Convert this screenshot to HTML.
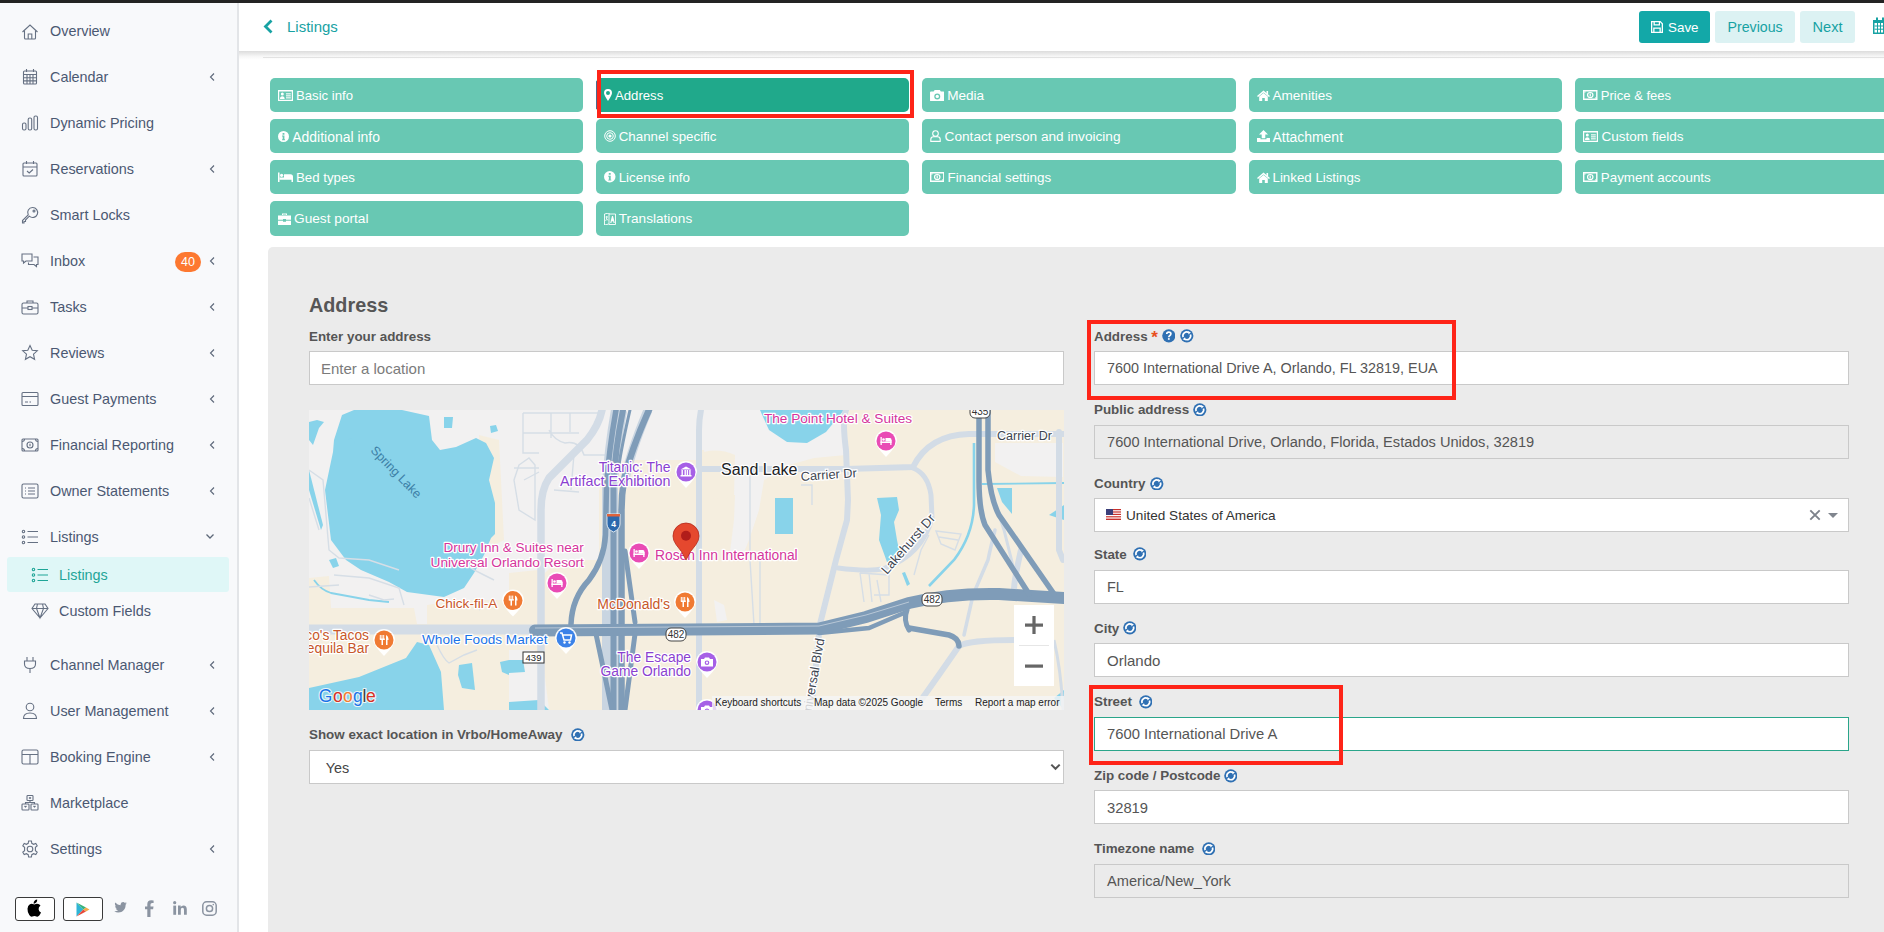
<!DOCTYPE html>
<html><head><meta charset="utf-8">
<style>
*{box-sizing:border-box;margin:0;padding:0}
html,body{width:1884px;height:932px;overflow:hidden;background:#fff;font-family:"Liberation Sans",sans-serif}
.abs{position:absolute}
#topbar{position:absolute;left:0;top:0;width:1884px;height:3px;background:#232323}
#side{position:absolute;left:0;top:3px;width:237px;height:929px;background:#f8f9fb}
#sideb{position:absolute;left:237px;top:3px;width:2px;height:929px;background:#e3e5e8}
.nav{position:absolute;left:0;width:237px;height:30px;color:#4b5872;font-size:14.4px}
.nav .t{position:absolute;left:50px;top:8px;white-space:nowrap}
.nav svg.i{position:absolute;left:20px;top:5.5px;width:20px;height:20px;fill:none;stroke:#667183;stroke-width:1.1}
.nav .ch{position:absolute;left:208px;top:11px;width:8px;height:10px}
#header{position:absolute;left:239px;top:3px;width:1645px;height:48px;background:#fff}
#hshadow{position:absolute;left:239px;top:51px;width:1645px;height:9px;background:linear-gradient(#dcdcdc,#f6f6f6 60%,#fff)}
.tab{position:absolute;height:34px;background:#68c8b3;border-radius:5px;color:#fff;font-size:13.5px;white-space:nowrap}
.tab .tt{position:absolute;left:26px;top:10px}
.tab svg{position:absolute;fill:#fff}
.tab.active{background:#20a98b}
.red{position:absolute;border:4px solid #fe2418}
#panel{position:absolute;left:268px;top:247px;width:1640px;height:700px;background:#ebebeb;border-radius:5px}
.lbl{position:absolute;font-weight:bold;font-size:13.4px;color:#555;white-space:nowrap}
.inp{position:absolute;height:34px;background:#fff;border:1px solid #c9c9c9;font-size:14.4px;color:#555;white-space:nowrap}
.inp .v{position:absolute;left:12px;top:8px}
.inp.dis{background:#ebebeb}
.rfa{position:absolute;width:13.6px;height:13.6px}
.badge{position:absolute;left:175px;top:7px;width:26px;height:20px;border-radius:10px;background:#fd7830;color:#fff;font-size:12.5px;text-align:center;line-height:20px}
.nav .chd{position:absolute;left:205px;top:11px;width:10px;height:8px}
#subact{position:absolute;left:7px;top:557px;width:222px;height:35px;background:#dff7f7;border-radius:3px}
.nav.sub .t{left:59px}
.nav.sub svg.i{left:30px}
.nav.act{color:#1fa597}
.nav.act svg.i{stroke:#1fa597}
</style></head><body>
<div id="topbar"></div>
<div id="side"></div>
<div id="sideb"></div>
<div class="nav" style="top:15px"><svg class="i" viewBox="0 0 20 20"><g transform="translate(0 1.5)"><path d="M2.5 9.5 L10 2.5 L17.5 9.5"/><path d="M4.5 8 V15.5 Q4.5 16.5 5.5 16.5 H14.5 Q15.5 16.5 15.5 15.5 V8"/><path d="M8.2 16.5 V11.5 H11.8 V16.5"/></g></svg><span class="t">Overview</span></div>
<div class="nav" style="top:61px"><svg class="i" viewBox="0 0 20 20"><rect x="3.5" y="4" width="13" height="13" rx="1"/><path d="M3.5 7.5 H16.5 M3.5 10.7 H16.5 M3.5 13.9 H16.5 M7 7.5 V17 M10 7.5 V17 M13 7.5 V17 M6.5 2 V5 M13.5 2 V5"/></svg><span class="t">Calendar</span><svg class="ch" viewBox="0 0 8 10"><path d="M6 1.5 L2.5 5 L6 8.5" fill="none" stroke="#5f6a7b" stroke-width="1.15"/></svg></div>
<div class="nav" style="top:107px"><svg class="i" viewBox="0 0 20 20"><rect x="2.5" y="10" width="3.5" height="7" rx="1.5"/><rect x="8.2" y="5" width="3.5" height="12" rx="1.5"/><rect x="14" y="3" width="3.5" height="14" rx="1.5"/></svg><span class="t">Dynamic Pricing</span></div>
<div class="nav" style="top:153px"><svg class="i" viewBox="0 0 20 20"><rect x="3" y="4" width="14" height="13" rx="1"/><path d="M3 8 H17 M6.5 2 V5 M13.5 2 V5 M7 12 L9.2 14 L13 10.5"/></svg><span class="t">Reservations</span><svg class="ch" viewBox="0 0 8 10"><path d="M6 1.5 L2.5 5 L6 8.5" fill="none" stroke="#5f6a7b" stroke-width="1.15"/></svg></div>
<div class="nav" style="top:199px"><svg class="i" viewBox="0 0 20 20"><path d="M12.5 2.5 A5 5 0 1 1 9.3 11.2 L5.5 15 L5.5 16.5 L4 16.5 L4 18 L2.5 18 L2.5 15.5 L8.2 9.8 A5 5 0 0 1 12.5 2.5 Z"/><circle cx="14" cy="6" r="1"/></svg><span class="t">Smart Locks</span></div>
<div class="nav" style="top:245px"><svg class="i" viewBox="0 0 20 20"><path d="M2 3 H12 V10 H6 L3.5 12 V10 H2 Z"/><path d="M13.5 6 H18 V13.5 H16.5 V15.5 L14 13.5 H8.5 V11.5"/></svg><span class="t">Inbox</span><span class="badge">40</span><svg class="ch" viewBox="0 0 8 10"><path d="M6 1.5 L2.5 5 L6 8.5" fill="none" stroke="#5f6a7b" stroke-width="1.15"/></svg></div>
<div class="nav" style="top:291px"><svg class="i" viewBox="0 0 20 20"><rect x="2" y="6" width="16" height="11" rx="1.5"/><path d="M7 6 V4 H13 V6 M2 11 H8 M12 11 H18"/><rect x="8" y="9.5" width="4" height="3"/></svg><span class="t">Tasks</span><svg class="ch" viewBox="0 0 8 10"><path d="M6 1.5 L2.5 5 L6 8.5" fill="none" stroke="#5f6a7b" stroke-width="1.15"/></svg></div>
<div class="nav" style="top:337px"><svg class="i" viewBox="0 0 20 20"><path d="M10 2.5 L12.2 7.3 L17.3 7.8 L13.5 11.2 L14.6 16.3 L10 13.7 L5.4 16.3 L6.5 11.2 L2.7 7.8 L7.8 7.3 Z"/></svg><span class="t">Reviews</span><svg class="ch" viewBox="0 0 8 10"><path d="M6 1.5 L2.5 5 L6 8.5" fill="none" stroke="#5f6a7b" stroke-width="1.15"/></svg></div>
<div class="nav" style="top:383px"><svg class="i" viewBox="0 0 20 20"><rect x="2" y="3.5" width="16" height="13" rx="1"/><path d="M2 7.5 H18 M5 13 H8 M9.5 13 H11"/></svg><span class="t">Guest Payments</span><svg class="ch" viewBox="0 0 8 10"><path d="M6 1.5 L2.5 5 L6 8.5" fill="none" stroke="#5f6a7b" stroke-width="1.15"/></svg></div>
<div class="nav" style="top:429px"><svg class="i" viewBox="0 0 20 20"><rect x="2" y="4" width="16" height="12" rx="1"/><circle cx="10" cy="10" r="3"/><path d="M2 6.5 Q4.5 6.5 4.5 4 M18 6.5 Q15.5 6.5 15.5 4 M2 13.5 Q4.5 13.5 4.5 16 M18 13.5 Q15.5 13.5 15.5 16 M10 8.8 V11.2"/></svg><span class="t">Financial Reporting</span><svg class="ch" viewBox="0 0 8 10"><path d="M6 1.5 L2.5 5 L6 8.5" fill="none" stroke="#5f6a7b" stroke-width="1.15"/></svg></div>
<div class="nav" style="top:475px"><svg class="i" viewBox="0 0 20 20"><rect x="2" y="3" width="16" height="14" rx="1.5"/><path d="M5 7 H6 M8 7 H15 M5 10 H6 M8 10 H15 M5 13 H6 M8 13 H15"/></svg><span class="t">Owner Statements</span><svg class="ch" viewBox="0 0 8 10"><path d="M6 1.5 L2.5 5 L6 8.5" fill="none" stroke="#5f6a7b" stroke-width="1.15"/></svg></div>
<div class="nav" style="top:521px"><svg class="i" viewBox="0 0 20 20"><circle cx="3.5" cy="4.5" r="1.2"/><circle cx="3.5" cy="10" r="1.2"/><circle cx="3.5" cy="15.5" r="1.2"/><path d="M7.5 4.5 H18 M7.5 10 H18 M7.5 15.5 H18"/></svg><span class="t">Listings</span><svg class="chd" viewBox="0 0 10 8"><path d="M1.5 2.5 L5 6 L8.5 2.5" fill="none" stroke="#5d6878" stroke-width="1.3"/></svg></div>
<div class="nav" style="top:649px"><svg class="i" viewBox="0 0 20 20"><path d="M7 2 V6 M13 2 V6 M4.5 6 H15.5 V9 Q15.5 13.5 10 13.5 Q4.5 13.5 4.5 9 Z M10 13.5 V18"/></svg><span class="t">Channel Manager</span><svg class="ch" viewBox="0 0 8 10"><path d="M6 1.5 L2.5 5 L6 8.5" fill="none" stroke="#5f6a7b" stroke-width="1.15"/></svg></div>
<div class="nav" style="top:695px"><svg class="i" viewBox="0 0 20 20"><circle cx="10" cy="6" r="3.8"/><path d="M3.5 17.5 Q3.5 12 10 12 Q16.5 12 16.5 17.5 Z"/></svg><span class="t">User Management</span><svg class="ch" viewBox="0 0 8 10"><path d="M6 1.5 L2.5 5 L6 8.5" fill="none" stroke="#5f6a7b" stroke-width="1.15"/></svg></div>
<div class="nav" style="top:741px"><svg class="i" viewBox="0 0 20 20"><rect x="2" y="3" width="16" height="14" rx="1.5"/><path d="M2 7.5 H18 M10 7.5 V17"/></svg><span class="t">Booking Engine</span><svg class="ch" viewBox="0 0 8 10"><path d="M6 1.5 L2.5 5 L6 8.5" fill="none" stroke="#5f6a7b" stroke-width="1.15"/></svg></div>
<div class="nav" style="top:787px"><svg class="i" viewBox="0 0 20 20"><rect x="7" y="2.5" width="6" height="5" rx="0.8"/><rect x="2" y="11" width="7" height="6" rx="0.8"/><rect x="11" y="11" width="7" height="6" rx="0.8"/><path d="M10 7.5 V9.5 M5.5 11 V9.5 H14.5 V11 M9 4.5 L10 5.5 L11 4.5 M4.5 13 L5.5 14 L6.5 13 M13.5 13 L14.5 14 L15.5 13"/></svg><span class="t">Marketplace</span></div>
<div class="nav" style="top:833px"><svg class="i" viewBox="0 0 20 20"><circle cx="10" cy="10" r="2.8"/><path d="M8.6 2 H11.4 L11.8 4.3 L13.6 5.3 L15.8 4.4 L17.2 6.8 L15.4 8.3 V11.7 L17.2 13.2 L15.8 15.6 L13.6 14.7 L11.8 15.7 L11.4 18 H8.6 L8.2 15.7 L6.4 14.7 L4.2 15.6 L2.8 13.2 L4.6 11.7 V8.3 L2.8 6.8 L4.2 4.4 L6.4 5.3 L8.2 4.3 Z"/></svg><span class="t">Settings</span><svg class="ch" viewBox="0 0 8 10"><path d="M6 1.5 L2.5 5 L6 8.5" fill="none" stroke="#5f6a7b" stroke-width="1.15"/></svg></div>
<div id="subact"></div>
<div class="nav sub act" style="top:559px"><svg class="i" viewBox="0 0 20 20"><circle cx="3.5" cy="4.5" r="1.2"/><circle cx="3.5" cy="10" r="1.2"/><circle cx="3.5" cy="15.5" r="1.2"/><path d="M7.5 4.5 H18 M7.5 10 H18 M7.5 15.5 H18"/></svg><span class="t">Listings</span></div>
<div class="nav sub" style="top:595px"><svg class="i" viewBox="0 0 20 20"><path d="M5 3 H15 L18 7.5 L10 17 L2 7.5 Z M2 7.5 H18 M7.5 3 L6.5 7.5 L10 17 L13.5 7.5 L12.5 3"/></svg><span class="t">Custom Fields</span></div>

<div id="header"></div>
<div id="hshadow"></div>
<svg class="abs" style="left:262px;top:18px" width="12" height="17" viewBox="0 0 12 17"><path d="M9.5 2.5 L3.5 8.5 L9.5 14.5" fill="none" stroke="#17a2a3" stroke-width="2.8"/></svg>
<div class="abs" style="left:287px;top:17.5px;font-size:15px;color:#17a2a3;white-space:nowrap">Listings</div>
<div class="abs" style="left:1639px;top:11px;width:71px;height:32px;background:#13a8a8;border-radius:3px"></div>
<svg class="abs" style="left:1651px;top:21px" width="12" height="12" viewBox="0 0 12 12"><path fill-rule="evenodd" fill="#fff" d="M0 0 H9.5 L12 2.5 V12 H0 Z M1.3 1.3 V10.7 H2.2 V6.5 H9.8 V10.7 H10.7 V3 L9 1.3 V4.5 H2.5 V1.3 Z M3.8 1.3 V3.3 H7.8 V1.3 Z M3.5 7.8 V10.7 H8.5 V7.8 Z"/></svg>
<div class="abs" style="left:1668px;top:19.5px;font-size:13.4px;color:#fff;white-space:nowrap">Save</div>
<div class="abs" style="left:1715px;top:11px;width:80px;height:32px;background:#dcf2f3;border-radius:3px"></div>
<div class="abs" style="left:1727.5px;top:19px;font-size:14.2px;color:#17a2a3;white-space:nowrap">Previous</div>
<div class="abs" style="left:1800px;top:11px;width:55px;height:32px;background:#dcf2f3;border-radius:3px"></div>
<div class="abs" style="left:1812.5px;top:19px;font-size:14.6px;color:#17a2a3;white-space:nowrap">Next</div>
<svg class="abs" style="left:1873px;top:17px" width="14" height="17" viewBox="0 0 14 17"><path fill-rule="evenodd" fill="#17a2a3" d="M0 3 H14 V17 H0 Z M1.5 6 V15.5 H12.5 V6 Z"/><path d="M1.5 9 H13 M1.5 12.2 H13 M4.5 6 V16 M7.5 6 V16 M10.5 6 V16" stroke="#17a2a3" stroke-width="1"/><rect x="3" y="0.5" width="2" height="4" fill="#17a2a3"/><rect x="9" y="0.5" width="2" height="4" fill="#17a2a3"/></svg>
<div class="abs" style="left:263px;top:57px;width:1621px;height:1px;background:#e2e2e2"></div>

<div class="abs" style="left:15px;top:897px;width:40px;height:24px;border:1px solid #3a3a3a;border-radius:3px;background:#fff"></div>
<svg class="abs" style="left:27px;top:899px" width="15" height="18" viewBox="0 0 15 18"><path fill="#000" d="M10.2 0.5 Q10.4 2.4 9.2 3.6 Q8 4.8 6.6 4.6 Q6.5 3 7.6 1.8 Q8.8 0.6 10.2 0.5 Z M7.5 5.4 Q8.6 4.8 10 4.8 Q12.3 4.9 13.5 6.6 Q11.4 8 11.6 10.3 Q11.8 12.6 14 13.6 Q13.4 15.3 12.3 16.6 Q11.3 17.8 10.2 17.7 Q9.3 17.6 8.6 17.3 Q7.5 16.9 6.3 17.3 Q5.3 17.7 4.6 17.7 Q3.4 17.6 2.3 16 Q0.3 13 0.5 9.8 Q0.7 6.6 2.9 5.3 Q4.3 4.6 5.6 5 Q6.6 5.4 7.5 5.4 Z"/></svg>
<div class="abs" style="left:63px;top:897px;width:40px;height:24px;border:1px solid #3a3a3a;border-radius:3px;background:#fff"></div>
<svg class="abs" style="left:76px;top:902px" width="14" height="15" viewBox="0 0 14 15"><path d="M0.5 0.5 L7.3 7.5 L0.5 14.5 Z" fill="#2fb5d6"/><path d="M0.5 0.5 L10 5.5 L7.3 7.5 Z" fill="#35b27a"/><path d="M0.5 14.5 L10 9.5 L7.3 7.5 Z" fill="#e5493a"/><path d="M10 5.5 L13.5 7.5 L10 9.5 L7.3 7.5 Z" fill="#f3a94a"/></svg>
<svg class="abs" style="left:114px;top:902px" width="13" height="11" viewBox="0 0 13 11"><path fill="#8b94a1" d="M12.8 1.3 Q12.2 1.6 11.4 1.7 Q12.2 1.2 12.5 0.3 Q11.8 0.7 10.9 0.9 Q10.2 0.1 9.1 0.1 Q7.1 0.1 6.6 2.2 Q6.5 2.7 6.6 3.2 Q3.5 3 1.3 0.5 Q0.9 1.2 0.9 2 Q0.9 3.4 2.1 4.2 Q1.5 4.2 1 3.9 Q1 5.8 2.9 6.4 Q2.3 6.6 1.7 6.5 Q2.3 8.1 4.1 8.2 Q2.4 9.5 0.2 9.3 Q2.1 10.5 4.2 10.5 Q8.4 10.5 10.6 7 Q11.6 5.3 11.6 3.3 V2.8 Q12.3 2.2 12.8 1.3 Z"/></svg>
<svg class="abs" style="left:145px;top:900px" width="9" height="17" viewBox="0 0 9 17"><path fill="#8b94a1" d="M2.3 17 V9.3 H0 V6.4 H2.3 V4.2 Q2.3 0.2 6.2 0.2 Q7.5 0.2 8.6 0.4 V3 H7.1 Q5.5 3 5.5 4.5 V6.4 H8.5 L8.1 9.3 H5.5 V17 Z"/></svg>
<svg class="abs" style="left:173px;top:901px" width="14" height="14" viewBox="0 0 14 14"><circle cx="1.7" cy="1.7" r="1.6" fill="#8b94a1"/><rect x="0.3" y="4.6" width="2.8" height="9.2" fill="#8b94a1"/><path fill="#8b94a1" d="M5 4.6 H7.7 V5.9 Q8.5 4.4 10.4 4.4 Q13.8 4.4 13.8 8.3 V13.8 H11 V8.9 Q11 6.8 9.5 6.8 Q7.8 6.8 7.8 8.9 V13.8 H5 Z"/></svg>
<svg class="abs" style="left:202px;top:901px" width="15" height="15" viewBox="0 0 15 15"><rect x="0.8" y="0.8" width="13.4" height="13.4" rx="3.8" fill="none" stroke="#8b94a1" stroke-width="1.5"/><circle cx="7.5" cy="7.5" r="3.1" fill="none" stroke="#8b94a1" stroke-width="1.5"/><circle cx="11.3" cy="3.6" r="0.8" fill="#8b94a1"/></svg>


<!-- tabs -->
<div class="tab" style="left:270px;top:78px;width:313px;height:34px"><svg style="left:7.5px;top:11.0px;width:15px;height:12.0px" viewBox="0 0 15 12"><path fill-rule="evenodd" d="M0 1 H15 V12 H0 Z M1.2 2.4 V10.8 H13.8 V2.4 Z"/><circle cx="4.3" cy="5" r="1.5"/><path d="M2 10 Q2 7.2 4.3 7.2 Q6.6 7.2 6.6 10 Z"/><rect x="8" y="4.3" width="4.8" height="1.1"/><rect x="8" y="6.3" width="4.8" height="1.1"/><rect x="8" y="8.3" width="4.8" height="1.1"/></svg><span class="tt" style="left:26.0px;font-size:13.15px">Basic info</span></div>
<div class="tab active" style="left:596px;top:78px;width:313px;height:34px"><svg style="left:8.0px;top:11.0px;width:8px;height:12.0px" viewBox="0 0 8 12"><path fill-rule="evenodd" d="M4 0 Q8 0 8 4 Q8 6 4 12 Q0 6 0 4 Q0 0 4 0 Z M4 2 A2 2 0 1 0 4 6 A2 2 0 1 0 4 2 Z"/></svg><span class="tt" style="left:19.0px;font-size:13.17px">Address</span></div>
<div class="tab" style="left:922px;top:78px;width:314px;height:34px"><svg style="left:7.7px;top:10.8px;width:14.5px;height:12.4px" viewBox="0 0 14 12"><path fill-rule="evenodd" d="M1 2.5 H3.5 L4.5 1 H9.5 L10.5 2.5 H13 Q14 2.5 14 3.5 V11 Q14 12 13 12 H1 Q0 12 0 11 V3.5 Q0 2.5 1 2.5 Z M7 4.3 A2.9 2.9 0 1 0 7 10.1 A2.9 2.9 0 1 0 7 4.3 Z"/><circle cx="7" cy="7.2" r="1.6"/></svg><span class="tt" style="left:25.2px;font-size:13.58px">Media</span></div>
<div class="tab" style="left:1249px;top:78px;width:313px;height:34px"><svg style="left:7.5px;top:11.5px;width:13px;height:11.0px" viewBox="0 0 13 11"><path d="M6.5 0.5 L13 6 L12 7 L6.5 2.5 L1 7 L0 6 Z"/><path d="M2.2 6.5 L6.5 3 L10.8 6.5 V11 H7.8 V8 H5.2 V11 H2.2 Z"/><rect x="9.5" y="1" width="1.6" height="3"/></svg><span class="tt" style="left:23.5px;font-size:13.55px">Amenities</span></div>
<div class="tab" style="left:1575px;top:78px;width:330px;height:34px"><svg style="left:8.0px;top:12.0px;width:14.5px;height:10.0px" viewBox="0 0 14.5 10"><path fill-rule="evenodd" d="M0 0 H14.5 V10 H0 Z M1.4 1.4 V8.6 H13.1 V1.4 Z"/><path fill-rule="evenodd" d="M7.25 1.9 A3.3 3.1 0 1 0 7.25 8.1 A3.3 3.1 0 1 0 7.25 1.9 Z M7.25 3.1 A2.1 1.9 0 1 1 7.25 6.9 A2.1 1.9 0 1 1 7.25 3.1 Z"/><path d="M6.6 3.6 H7.8 V6.6 H6.6 Z M6.2 3.9 L6.8 3.5 V4.3 Z"/><path d="M1.4 2.8 Q2.8 2.8 2.8 1.4 H1.4 Z M13.1 7.2 Q11.7 7.2 11.7 8.6 H13.1 Z"/></svg><span class="tt" style="left:25.8px;font-size:13.06px">Price &amp; fees</span></div>
<div class="tab" style="left:270px;top:119px;width:313px;height:34px"><svg style="left:7.5px;top:11.5px;width:11px;height:11.0px" viewBox="0 0 12 12"><path fill-rule="evenodd" d="M6 0 A6 6 0 1 0 6 12 A6 6 0 1 0 6 0 Z M5 2.2 H7 V4 H5 Z M4.4 5 H7 V9 H7.7 V10 H4.4 V9 H5.1 V6 H4.4 Z"/></svg><span class="tt" style="left:22.3px;font-size:13.96px">Additional info</span></div>
<div class="tab" style="left:596px;top:119px;width:313px;height:34px"><svg style="left:8.0px;top:11.0px;width:12px;height:12.0px" viewBox="0 0 12 12"><circle cx="6" cy="6" r="5.3" fill="none" stroke="#fff" stroke-width="1"/><circle cx="6" cy="6" r="3.3" fill="none" stroke="#fff" stroke-width="1"/><circle cx="6" cy="6" r="1.6"/></svg><span class="tt" style="left:22.7px;font-size:13.33px">Channel specific</span></div>
<div class="tab" style="left:922px;top:119px;width:314px;height:34px"><svg style="left:7.7px;top:11.0px;width:11px;height:12.0px" viewBox="0 0 11 12"><circle cx="5.5" cy="3.5" r="2.8" fill="none" stroke="#fff" stroke-width="1.1"/><path d="M0.8 11.4 V9.5 Q0.8 6.8 3.5 6.8 H7.5 Q10.2 6.8 10.2 9.5 V11.4 Z" fill="none" stroke="#fff" stroke-width="1.1"/></svg><span class="tt" style="left:22.6px;font-size:13.65px">Contact person and invoicing</span></div>
<div class="tab" style="left:1249px;top:119px;width:313px;height:34px"><svg style="left:7.5px;top:11.0px;width:13px;height:12.0px" viewBox="0 0 13 12"><path d="M6.5 0 L11 4.5 H8.3 V8.2 H4.7 V4.5 H2 Z"/><path d="M0 8 H3.5 V9.2 H9.5 V8 H13 V12 H0 Z"/></svg><span class="tt" style="left:23.5px;font-size:13.94px">Attachment</span></div>
<div class="tab" style="left:1575px;top:119px;width:330px;height:34px"><svg style="left:8.0px;top:11.0px;width:15px;height:12.0px" viewBox="0 0 15 12"><path fill-rule="evenodd" d="M0 1 H15 V12 H0 Z M1.2 2.4 V10.8 H13.8 V2.4 Z"/><circle cx="4.3" cy="5" r="1.5"/><path d="M2 10 Q2 7.2 4.3 7.2 Q6.6 7.2 6.6 10 Z"/><rect x="8" y="4.3" width="4.8" height="1.1"/><rect x="8" y="6.3" width="4.8" height="1.1"/><rect x="8" y="8.3" width="4.8" height="1.1"/></svg><span class="tt" style="left:26.5px;font-size:13.54px">Custom fields</span></div>
<div class="tab" style="left:270px;top:160px;width:313px;height:34px"><svg style="left:7.5px;top:12.0px;width:15px;height:10.0px" viewBox="0 0 15 10"><rect x="0" y="0.5" width="1.5" height="9.5"/><circle cx="3.6" cy="3.3" r="1.6"/><path d="M6 2.2 H12.5 Q15 2.2 15 4.7 V10 H13.5 V7.8 H1.5 V5.5 H6 Z"/></svg><span class="tt" style="left:26.0px;font-size:13.27px">Bed types</span></div>
<div class="tab" style="left:596px;top:160px;width:313px;height:34px"><svg style="left:8.0px;top:11.2px;width:11.5px;height:11.5px" viewBox="0 0 12 12"><path fill-rule="evenodd" d="M6 0 A6 6 0 1 0 6 12 A6 6 0 1 0 6 0 Z M5 2.2 H7 V4 H5 Z M4.4 5 H7 V9 H7.7 V10 H4.4 V9 H5.1 V6 H4.4 Z"/></svg><span class="tt" style="left:22.7px;font-size:13.36px">License info</span></div>
<div class="tab" style="left:922px;top:160px;width:314px;height:34px"><svg style="left:7.7px;top:12.0px;width:14.5px;height:10.0px" viewBox="0 0 14.5 10"><path fill-rule="evenodd" d="M0 0 H14.5 V10 H0 Z M1.4 1.4 V8.6 H13.1 V1.4 Z"/><path fill-rule="evenodd" d="M7.25 1.9 A3.3 3.1 0 1 0 7.25 8.1 A3.3 3.1 0 1 0 7.25 1.9 Z M7.25 3.1 A2.1 1.9 0 1 1 7.25 6.9 A2.1 1.9 0 1 1 7.25 3.1 Z"/><path d="M6.6 3.6 H7.8 V6.6 H6.6 Z M6.2 3.9 L6.8 3.5 V4.3 Z"/><path d="M1.4 2.8 Q2.8 2.8 2.8 1.4 H1.4 Z M13.1 7.2 Q11.7 7.2 11.7 8.6 H13.1 Z"/></svg><span class="tt" style="left:25.5px;font-size:13.43px">Financial settings</span></div>
<div class="tab" style="left:1249px;top:160px;width:313px;height:34px"><svg style="left:7.5px;top:11.5px;width:13px;height:11.0px" viewBox="0 0 13 11"><path d="M6.5 0.5 L13 6 L12 7 L6.5 2.5 L1 7 L0 6 Z"/><path d="M2.2 6.5 L6.5 3 L10.8 6.5 V11 H7.8 V8 H5.2 V11 H2.2 Z"/><rect x="9.5" y="1" width="1.6" height="3"/></svg><span class="tt" style="left:23.5px;font-size:13.30px">Linked Listings</span></div>
<div class="tab" style="left:1575px;top:160px;width:330px;height:34px"><svg style="left:8.0px;top:12.0px;width:14.5px;height:10.0px" viewBox="0 0 14.5 10"><path fill-rule="evenodd" d="M0 0 H14.5 V10 H0 Z M1.4 1.4 V8.6 H13.1 V1.4 Z"/><path fill-rule="evenodd" d="M7.25 1.9 A3.3 3.1 0 1 0 7.25 8.1 A3.3 3.1 0 1 0 7.25 1.9 Z M7.25 3.1 A2.1 1.9 0 1 1 7.25 6.9 A2.1 1.9 0 1 1 7.25 3.1 Z"/><path d="M6.6 3.6 H7.8 V6.6 H6.6 Z M6.2 3.9 L6.8 3.5 V4.3 Z"/><path d="M1.4 2.8 Q2.8 2.8 2.8 1.4 H1.4 Z M13.1 7.2 Q11.7 7.2 11.7 8.6 H13.1 Z"/></svg><span class="tt" style="left:25.8px;font-size:13.37px">Payment accounts</span></div>
<div class="tab" style="left:270px;top:201px;width:313px;height:35px"><svg style="left:7.5px;top:11.5px;width:13px;height:12.0px" viewBox="0 0 13 12"><path fill-rule="evenodd" d="M4 2 V0.5 H9 V2 H8 V1.5 H5 V2 Z"/><path d="M0 2.5 H13 V6.8 H8 V6 H5 V6.8 H0 Z"/><path d="M0 7.8 H5 V8.8 H8 V7.8 H13 V12 H0 Z"/></svg><span class="tt" style="left:24.0px;font-size:13.68px">Guest portal</span></div>
<div class="tab" style="left:596px;top:201px;width:313px;height:35px"><svg style="left:8.0px;top:11.5px;width:12px;height:12.0px" viewBox="0 0 12 12"><path d="M0.5 1 L5 0 V11 L0.5 12 Z" fill="none" stroke="#fff" stroke-width="0.9"/><path d="M5 1 H11.5 V11.5 H5" fill="none" stroke="#fff" stroke-width="0.9"/><path d="M6.2 10 L8 3 H9 L10.8 10 H9.6 L9.2 8.3 H7.8 L7.4 10 Z"/><path d="M1.5 4 H4 M2.7 3 V4 Q2.7 7 1.5 8 M2.7 5.5 L4 7.5" fill="none" stroke="#fff" stroke-width="0.8"/></svg><span class="tt" style="left:22.7px;font-size:13.60px">Translations</span></div>
<div class="abs" style="left:595.5px;top:81px;width:1.5px;height:28px;background:#4b6a8c;border-radius:1px"></div>
<div id="panel"></div>

<div class="abs" style="left:309px;top:294px;font-weight:bold;font-size:19.8px;color:#565656;white-space:nowrap">Address</div>
<div class="lbl" style="left:309px;top:329px">Enter your address</div>
<div class="inp" style="left:309px;top:351px;width:755px;height:34px"><span class="v" style="left:11px;top:7.6px;color:#7b7b7b;font-size:15px">Enter a location</span></div>
<svg class="abs" style="left:309px;top:410px" width="755" height="300" viewBox="0 0 755 300">
<defs><clipPath id="mc"><rect width="755" height="300"/></clipPath></defs>
<g clip-path="url(#mc)">
<rect width="755" height="300" fill="#f2f1f1"/>
<!-- beige regions -->
<g fill="#f5eedf">
<path d="M290 300 L290 80 L300 60 L316 50 L388 50 L388 0 L755 0 L755 300 Z"/>
<path d="M0 168 L20 166 L22 198 L105 198 L108 214 L118 214 L118 165 L200 165 L215 182 L250 150 L290 150 L290 300 L0 300 Z"/>
<path d="M170 25 L190 30 L195 130 L185 135 L175 130 Z"/>
</g>
<!-- white patches over beige -->
<g fill="#f2f1f1">
<path d="M316 0 L390 0 L390 50 L316 50 Z"/>
<path d="M390 0 L537 0 L537 45 L505 48 L480 55 L455 70 L450 100 L440 130 L432 150 L420 150 L425 110 L426 85 L400 85 L395 40 L390 40 Z"/>
<path d="M686 33 L754 33 L754 67 L712 66 L686 52 Z"/>
<path d="M405 190 L415 195 L418 210 L408 212 Z" />
<path d="M22 168 L100 178 L105 198 L22 198 Z"/>
<path d="M118 165 L160 162 L200 165 L215 182 L200 190 L150 190 L118 195 Z"/>
<path d="M200 300 L200 240 L226 240 L235 260 L240 300 Z"/>
</g>
<path d="M200 163 L229 160 L229 214 L200 214 Z" fill="#f5eedf"/>
<path d="M395 42 Q410 38 426 45 L425 86 Q410 92 396 86 Z" fill="#f5eedf"/>
<!-- water -->
<g fill="#88d3ea">
<path d="M33 5 L45 0 L93 0 L120 6 L123 30 L131 40 L147 37 L167 28 L177 33 L185 48 L180 70 L186 93 L186 124 L182 128 L175 145 L165 163 L155 178 L135 187 L98 182 L80 172 L52 160 L37 150 L22 130 L16 80 L24 42 L25 30 Z"/>
<path d="M0 278 L50 267 L97 248 L108 232 L120 235 L132 262 L135 300 L0 300 Z"/>
<path d="M0 12 L8 10 L15 12 L10 18 L4 35 L0 30 Z"/>
<path d="M0 60 L14 115 L12 120 L0 80 Z"/>
<path d="M135 7 L144 7 L143 18 L135 18 Z"/>
<path d="M181 16 L187 15 L189 21 L182 23 Z"/>
<path d="M38 30 L43 28 L46 33 L41 36 Z" fill="#88d3ea"/>
<path d="M20 150 L27 148 L30 156 L24 158 Z"/>
<path d="M150 255 L163 253 L166 280 L153 278 L149 265 Z"/>
<path d="M191 252 L200 250 L200 265 L193 262 Z"/>
<path d="M200 250 L214 250 L216 262 L200 263 Z"/>
<path d="M200 292 L230 290 L240 300 L200 300 Z"/>
<path d="M451 0 L535 0 L517 22 L498 33 L478 32 L460 20 Z"/>
<path d="M466 88 L484 88 L484 124 L466 124 Z"/>
<path d="M568 88 L588 87 L590 100 L585 112 L588 130 L592 150 L578 152 L570 130 L572 105 Z"/>
<path d="M688 78 L703 78 L703 104 L693 92 Z"/>
<path d="M745 288 L755 280 L755 300 Z"/>
<path d="M593 163 L596 162 L601 174 L598 176 Z"/>
<path d="M740 105 L755 95 L755 110 Z"/>
</g>
<g fill="none" stroke="#88d3ea" stroke-width="1.8">
<path d="M665 33 L665 95 Q664 125 645 150 L620 176" stroke-width="2.6"/>
<path d="M673 74 L755 73"/>
<path d="M5 170 Q12 180 22 183 L60 190 L80 192"/>
</g>
<!-- minor roads thin -->
<g fill="none" stroke="#d6dee6" stroke-width="1.4">
<path d="M214 3 H295 M214 23 H270 M214 3 V43 L230 43 M242 3 V28 M261 3 V22 M240 20 Q245 30 256 33 Q270 30 275 45 L305 45"/>
<path d="M210 55 L220 48 L226 55 L226 110 L210 100 L205 70 Z"/>
<path d="M205 58 L230 58 M215 70 L230 62 M245 80 L270 82 M265 44 L262 80"/>
<path d="M0 60 L14 70 L20 140 L30 148 L60 150 L90 160 M0 88 L10 120"/>
<path d="M25 165 L60 168 L90 178 L95 195 M0 177 L30 175 M60 185 L75 190 L85 189"/>
<path d="M157 155 L165 160 L175 165 L185 170 M170 200 L175 195"/>
<path d="M128 235 Q135 250 140 253 L155 245 L168 240"/>
<path d="M441 65 V150 L445 215"/>
<path d="M451 150 V215"/>
<path d="M492 75 H503 V95"/>
<path d="M551 163 L555 192 M560 163 L563 192 M568 170 L572 192 M551 163 L580 165 L580 185 L565 185"/>
<path d="M627 121 L652 124 L646 140 L632 134 Z M630 127 L649 130"/>
<path d="M620 125 L612 140 L605 165"/>
</g>
<!-- secondary roads -->
<g fill="none" stroke="#d3dce6" stroke-width="6" stroke-linecap="round">
<path d="M293 0 Q290 15 278 30 L240 68 Q232 80 232 100 V300" stroke-width="7.5"/>
<path d="M392 0 Q390 10 390 20 V300"/>
<path d="M0 219.5 H226" stroke-width="10" stroke-linecap="butt"/>
<path d="M388 59 H537 L604 57 Q620 25 660 24 H755"/>
<path d="M537 0 Q533 10 537 40 L539 90 L538 110 L527 150 L511 214 L504.6 279 L502 300"/>
<path d="M604 58 Q619 64 622 85 L623 108 Q613 145 575 158.5 Q560 162 529 158" stroke-width="5"/>
<path d="M750 22 V140 L754 150"/>
<path d="M650 236 Q660 230 705 230"/>
<path d="M650 236 Q630 265 605 300"/>
<path d="M686 120 Q681 140 679 150 L664 185 L655 225" stroke-width="3.5"/>
<path d="M712 140 Q705 170 705 180"/>
</g>
<g fill="none" stroke="#d3dce6" stroke-width="3">
<path d="M745 230 Q752 260 754 300"/>
<path d="M690 105 L695 120 Q700 140 705 160"/>
</g>
<!-- highways -->
<g fill="none" stroke-linecap="butt">
<path d="M310 0 Q303 40 301 75 L301 300" stroke="#c9d5e1" stroke-width="16"/>
<path d="M339 0 Q320 45 315 75" stroke="#c9d5e1" stroke-width="9"/>
</g>
<g fill="none" stroke="#7f9cb8" stroke-linecap="round">
<path d="M307 0 Q300 40 297.5 75 L296.5 125 Q295 150 280 170 Q263 188 262 214" stroke-width="5.5"/>
<path d="M314 0 Q306 40 304.5 75 L304.5 300" stroke-width="6"/>
<path d="M321 0 Q313 35 310 55" stroke-width="3"/>
<path d="M340 0 Q322 40 315 70 Q312.5 85 312.5 100 L312.5 300" stroke-width="6.5"/>
<path d="M316 141 L326 212" stroke-width="5"/>
<path d="M226 220.5 L510 218.5 L557 207 L600 193 Q640 183 690 184 L755 188" stroke-width="12"/>
<path d="M510 223 L560 218 L595 203" stroke-width="4.5"/>
<path d="M287 224 L303 300" stroke-width="5"/>
<path d="M326 224 L316 300" stroke-width="5"/>
<path d="M670 0 V70 Q670 100 676 115 L720 184" stroke-width="5.5"/>
<path d="M679 0 V60 Q682 90 690 105 L745 184" stroke-width="5.5"/>
<path d="M600 218 L640 225 Q650 228 650 236" stroke-width="5.5"/>
<path d="M598 200 Q594 210 600 220" stroke-width="5"/>
</g>
<g fill="none" stroke="#b8c7d6" stroke-width="1">
<path d="M226 218 L510 216 L557 205 L600 192"/>
</g>
<g font-family="Liberation Sans, sans-serif">
<text x="0" y="0" fill="#3c7fa6" font-size="12.5" transform="translate(61 41) rotate(46)">Spring Lake</text>
<text x="134.4" y="142.3" fill="#d5359c" font-size="13.5" text-anchor="start" font-weight="normal" stroke="#fff" stroke-width="2.5" paint-order="stroke" stroke-linejoin="round" >Drury Inn &amp; Suites near</text>
<text x="121.6" y="156.6" fill="#d5359c" font-size="13.66" text-anchor="start" font-weight="normal" stroke="#fff" stroke-width="2.5" paint-order="stroke" stroke-linejoin="round" >Universal Orlando Resort</text>
<text x="126.4" y="198" fill="#c8572a" font-size="13.6" text-anchor="start" font-weight="normal" stroke="#fff" stroke-width="2.5" paint-order="stroke" stroke-linejoin="round" >Chick-fil-A</text>
<text x="60" y="229.6" fill="#c8572a" font-size="13.8" text-anchor="end" font-weight="normal" stroke="#fff" stroke-width="2.5" paint-order="stroke" stroke-linejoin="round" >co's Tacos</text>
<text x="60" y="243.3" fill="#c8572a" font-size="13.8" text-anchor="end" font-weight="normal" stroke="#fff" stroke-width="2.5" paint-order="stroke" stroke-linejoin="round" >Tequila Bar</text>
<text x="113" y="234" fill="#1a73e8" font-size="13.6" text-anchor="start" font-weight="normal" stroke="#fff" stroke-width="2.5" paint-order="stroke" stroke-linejoin="round" >Whole Foods Market</text>
<text x="361.5" y="62" fill="#8b3fd0" font-size="13.9" text-anchor="end" font-weight="normal" stroke="#fff" stroke-width="2.5" paint-order="stroke" stroke-linejoin="round" >Titanic: The</text>
<text x="361.5" y="76" fill="#8b3fd0" font-size="14.3" text-anchor="end" font-weight="normal" stroke="#fff" stroke-width="2.5" paint-order="stroke" stroke-linejoin="round" >Artifact Exhibition</text>
<text x="361" y="199" fill="#c8572a" font-size="14" text-anchor="end" font-weight="normal" stroke="#fff" stroke-width="2.5" paint-order="stroke" stroke-linejoin="round" >McDonald's</text>
<text x="382" y="252" fill="#8b3fd0" font-size="13.8" text-anchor="end" font-weight="normal" stroke="#fff" stroke-width="2.5" paint-order="stroke" stroke-linejoin="round" >The Escape</text>
<text x="382" y="266" fill="#8b3fd0" font-size="13.8" text-anchor="end" font-weight="normal" stroke="#fff" stroke-width="2.5" paint-order="stroke" stroke-linejoin="round" >Game Orlando</text>
<text x="346" y="150" fill="#d5359c" font-size="13.8" text-anchor="start" font-weight="normal" stroke="#fff" stroke-width="2.5" paint-order="stroke" stroke-linejoin="round" >Rosen Inn International</text>
<text x="455" y="13" fill="#d5359c" font-size="13.6" text-anchor="start" font-weight="normal" stroke="#fff" stroke-width="2.5" paint-order="stroke" stroke-linejoin="round" >The Point Hotel &amp; Suites</text>
<text x="412" y="65" fill="#202124" font-size="16" text-anchor="start" font-weight="normal" stroke="#fff" stroke-width="2.5" paint-order="stroke" stroke-linejoin="round" >Sand Lake</text>
<text x="0" y="0" fill="#3d4550" font-size="12.8" stroke="#fff" stroke-width="2.5" paint-order="stroke" transform="translate(492 71) rotate(-4)">Carrier Dr</text>
<text x="688" y="30" fill="#3d4550" font-size="12.5" text-anchor="start" font-weight="normal" stroke="#fff" stroke-width="2.5" paint-order="stroke" stroke-linejoin="round" >Carrier Dr</text>
<text x="0" y="0" fill="#3d4550" font-size="13" stroke="#fff" stroke-width="2.5" paint-order="stroke" transform="translate(578 165) rotate(-49)">Lakehurst Dr</text>
<text x="0" y="0" fill="#3d4550" font-size="13" stroke="#fff" stroke-width="2.5" paint-order="stroke" transform="translate(501 311) rotate(-80)">Universal Blvd</text>
<g><path d="M366 62 A11 11 0 1 1 388 62 Q387 68 377 78 Q367 68 366 62 Z" fill="#fff" opacity="0.95"/><circle cx="377" cy="62" r="9.5" fill="#a65fe6"/><g fill="#fff"><path d="M371.5 59.5 L377 56.5 L382.5 59.5 Z"/><rect x="371.5" y="65" width="11" height="1.5"/><rect x="372.5" y="60" width="1.4" height="5"/><rect x="375.5" y="60" width="1.4" height="5"/><rect x="377.7" y="60" width="1.4" height="5"/><rect x="380.2" y="60" width="1.4" height="5"/></g></g>
<g><path d="M237 173 A11 11 0 1 1 259 173 Q258 179 248 189 Q238 179 237 173 Z" fill="#fff" opacity="0.95"/><circle cx="248" cy="173" r="9.5" fill="#e94bb5"/><g fill="#fff"><rect x="242.5" y="169" width="1.3" height="8"/><rect x="242.5" y="173.5" width="11" height="1.5"/><rect x="252.2" y="172" width="1.3" height="5"/><circle cx="245.5" cy="171.5" r="1.3"/><path d="M247.5 170 H252 Q253.5 170 253.5 172 V173.5 H247.5 Z"/></g></g>
<g><path d="M193 190.6 A11 11 0 1 1 215 190.6 Q214 196.6 204 206.6 Q194 196.6 193 190.6 Z" fill="#fff" opacity="0.95"/><circle cx="204" cy="190.6" r="9.5" fill="#f07a33"/><g fill="#fff"><rect x="199.8" y="185.6" width="1" height="4"/><rect x="201.5" y="185.6" width="1" height="4"/><rect x="203.2" y="185.6" width="1" height="4"/><rect x="199.8" y="189.1" width="5" height="1.5"/><rect x="201.5" y="189.6" width="1.5" height="6"/><path d="M206 195.6 V185.6 Q208.5 186.6 208.5 190.6 H207.5 V195.6 Z"/></g></g>
<g><path d="M64 230 A11 11 0 1 1 86 230 Q85 236 75 246 Q65 236 64 230 Z" fill="#fff" opacity="0.95"/><circle cx="75" cy="230" r="9.5" fill="#f07a33"/><g fill="#fff"><rect x="70.8" y="225" width="1" height="4"/><rect x="72.5" y="225" width="1" height="4"/><rect x="74.2" y="225" width="1" height="4"/><rect x="70.8" y="228.5" width="5" height="1.5"/><rect x="72.5" y="229" width="1.5" height="6"/><path d="M77 235 V225 Q79.5 226 79.5 230 H78.5 V235 Z"/></g></g>
<g><path d="M246 228 A11 11 0 1 1 268 228 Q267 234 257 244 Q247 234 246 228 Z" fill="#fff" opacity="0.95"/><circle cx="257" cy="228" r="9.5" fill="#3b82e8"/><g fill="none" stroke="#fff" stroke-width="1.5"><path d="M251 223 H253 L255 230 H261.5 L262.5 225 H254"/></g><circle cx="255.5" cy="232.5" r="1.2" fill="#fff"/><circle cx="260.5" cy="232.5" r="1.2" fill="#fff"/></g>
<g><path d="M319 143 A11 11 0 1 1 341 143 Q340 149 330 159 Q320 149 319 143 Z" fill="#fff" opacity="0.95"/><circle cx="330" cy="143" r="9.5" fill="#e94bb5"/><g fill="#fff"><rect x="324.5" y="139" width="1.3" height="8"/><rect x="324.5" y="143.5" width="11" height="1.5"/><rect x="334.2" y="142" width="1.3" height="5"/><circle cx="327.5" cy="141.5" r="1.3"/><path d="M329.5 140 H334 Q335.5 140 335.5 142 V143.5 H329.5 Z"/></g></g>
<g><path d="M365 192 A11 11 0 1 1 387 192 Q386 198 376 208 Q366 198 365 192 Z" fill="#fff" opacity="0.95"/><circle cx="376" cy="192" r="9.5" fill="#f07a33"/><g fill="#fff"><rect x="371.8" y="187" width="1" height="4"/><rect x="373.5" y="187" width="1" height="4"/><rect x="375.2" y="187" width="1" height="4"/><rect x="371.8" y="190.5" width="5" height="1.5"/><rect x="373.5" y="191" width="1.5" height="6"/><path d="M378 197 V187 Q380.5 188 380.5 192 H379.5 V197 Z"/></g></g>
<g><path d="M387 252 A11 11 0 1 1 409 252 Q408 258 398 268 Q388 258 387 252 Z" fill="#fff" opacity="0.95"/><circle cx="398" cy="252" r="9.5" fill="#a65fe6"/><g fill="#fff"><path d="M392 249 H395 L396 247.5 H400 L401 249 H404 V256.5 H392 Z"/></g><circle cx="398" cy="252.7" r="2.3" fill="#a65fe6"/><circle cx="398" cy="252.7" r="1.1" fill="#fff"/></g>
<g><path d="M566 31 A11 11 0 1 1 588 31 Q587 37 577 47 Q567 37 566 31 Z" fill="#fff" opacity="0.95"/><circle cx="577" cy="31" r="9.5" fill="#e94bb5"/><g fill="#fff"><rect x="571.5" y="27" width="1.3" height="8"/><rect x="571.5" y="31.5" width="11" height="1.5"/><rect x="581.2" y="30" width="1.3" height="5"/><circle cx="574.5" cy="29.5" r="1.3"/><path d="M576.5 28 H581 Q582.5 28 582.5 30 V31.5 H576.5 Z"/></g></g>
<g><path d="M387 300 A11 11 0 1 1 409 300 Q408 306 398 316 Q388 306 387 300 Z" fill="#fff" opacity="0.95"/><circle cx="398" cy="300" r="9.5" fill="#a65fe6"/><g fill="#fff"><path d="M392 297 H395 L396 295.5 H400 L401 297 H404 V304.5 H392 Z"/></g><circle cx="398" cy="300.7" r="2.3" fill="#a65fe6"/><circle cx="398" cy="300.7" r="1.1" fill="#fff"/></g>
<rect x="357" y="218" width="20" height="13" rx="5" fill="#fff" stroke="#444" stroke-width="1"/><text x="367.0" y="228" font-size="10" fill="#333" text-anchor="middle">482</text>
<rect x="613" y="183" width="20" height="13" rx="5" fill="#fff" stroke="#444" stroke-width="1"/><text x="623.0" y="193" font-size="10" fill="#333" text-anchor="middle">482</text>
<rect x="661" y="-5" width="20" height="13" rx="5" fill="#fff" stroke="#444" stroke-width="1"/><text x="671.0" y="5" font-size="10" fill="#333" text-anchor="middle">435</text>
<rect x="214" y="242" width="21" height="11" fill="#fff" stroke="#333" stroke-width="1"/><text x="224.5" y="251" font-size="9.5" fill="#222" text-anchor="middle">439</text>
<path d="M298 104 H311 V114 Q311 119 304.5 122 Q298 119 298 114 Z" fill="#2c69ad" stroke="#fff" stroke-width="0.8"/><rect x="298" y="104" width="13" height="2.5" fill="#e0633a"/><text x="304.5" y="116.5" font-size="8.5" font-weight="bold" fill="#fff" text-anchor="middle">4</text>
<path d="M377 150 Q373 141 367 134.5 Q364 130.5 364 126 A13 13 0 1 1 390 126 Q390 130.5 387 134.5 Q381 141 377 150 Z" fill="#e5482e" stroke="#b3281a" stroke-width="0.8"/><circle cx="377" cy="125.8" r="5" fill="#b11d1a"/>
<rect x="705" y="195" width="40" height="81" fill="#fff"/><rect x="710" y="235" width="30" height="1" fill="#e6e6e6"/><rect x="716" y="213.5" width="18" height="3.2" fill="#666"/><rect x="723.4" y="206" width="3.2" height="18" fill="#666"/><rect x="716" y="254.5" width="18" height="3.2" fill="#666"/>
<rect x="403" y="286" width="352" height="14" fill="#f5f5f5" opacity="0.8"/>
<text x="406" y="295.7" font-size="10" fill="#222">Keyboard shortcuts</text>
<text x="505" y="295.7" font-size="10" fill="#222">Map data ©2025 Google</text>
<text x="626" y="295.7" font-size="10" fill="#222">Terms</text>
<text x="666" y="295.7" font-size="10" fill="#222">Report a map error</text>
<g font-size="17.5" stroke="#e8f6f8" stroke-width="2.2" paint-order="stroke" stroke-linejoin="round"><text x="9.8" y="291.5" fill="#1a73e8">G</text><text x="24" y="291.5" fill="#d93025">o</text><text x="34" y="291.5" fill="#f57a30">o</text><text x="44" y="291.5" fill="#1a73e8">g</text><text x="53.6" y="291.5" fill="#3c4043">l</text><text x="57" y="291.5" fill="#d93025">e</text></g>
</g>
</g>
</svg>

<svg class="rfa" style="left:1180.2px;top:329.3px" viewBox="0 0 14 14"><circle cx="7" cy="7" r="6.8" fill="#2f70b3"/><path d="M10.76 5.63 A4 4 0 0 1 5 10.46" fill="none" stroke="#fff" stroke-width="1.7"/><path d="M3.24 8.37 A4 4 0 0 1 9 3.54" fill="none" stroke="#fff" stroke-width="1.7"/><path d="M8.2 2.2 L11.2 3.4 L8.8 5.6 Z" fill="#fff"/><path d="M5.8 11.8 L2.8 10.6 L5.2 8.4 Z" fill="#fff"/></svg>
<svg class="rfa" style="left:1161.5px;top:329.3px" viewBox="0 0 14 14"><circle cx="7" cy="7" r="6.8" fill="#2f70b3"/><path d="M4.9 5.2 Q4.9 3.2 7 3.2 Q9.2 3.2 9.2 5 Q9.2 6.2 7.9 6.9 Q7 7.4 7 8.4" fill="none" stroke="#fff" stroke-width="1.7"/><rect x="6.1" y="9.4" width="1.8" height="1.7" fill="#fff"/></svg>
<svg class="rfa" style="left:1193.0px;top:402.5px" viewBox="0 0 14 14"><circle cx="7" cy="7" r="6.8" fill="#2f70b3"/><path d="M10.76 5.63 A4 4 0 0 1 5 10.46" fill="none" stroke="#fff" stroke-width="1.7"/><path d="M3.24 8.37 A4 4 0 0 1 9 3.54" fill="none" stroke="#fff" stroke-width="1.7"/><path d="M8.2 2.2 L11.2 3.4 L8.8 5.6 Z" fill="#fff"/><path d="M5.8 11.8 L2.8 10.6 L5.2 8.4 Z" fill="#fff"/></svg>
<svg class="rfa" style="left:1150.4px;top:476.5px" viewBox="0 0 14 14"><circle cx="7" cy="7" r="6.8" fill="#2f70b3"/><path d="M10.76 5.63 A4 4 0 0 1 5 10.46" fill="none" stroke="#fff" stroke-width="1.7"/><path d="M3.24 8.37 A4 4 0 0 1 9 3.54" fill="none" stroke="#fff" stroke-width="1.7"/><path d="M8.2 2.2 L11.2 3.4 L8.8 5.6 Z" fill="#fff"/><path d="M5.8 11.8 L2.8 10.6 L5.2 8.4 Z" fill="#fff"/></svg>
<svg class="rfa" style="left:1132.5px;top:547.0px" viewBox="0 0 14 14"><circle cx="7" cy="7" r="6.8" fill="#2f70b3"/><path d="M10.76 5.63 A4 4 0 0 1 5 10.46" fill="none" stroke="#fff" stroke-width="1.7"/><path d="M3.24 8.37 A4 4 0 0 1 9 3.54" fill="none" stroke="#fff" stroke-width="1.7"/><path d="M8.2 2.2 L11.2 3.4 L8.8 5.6 Z" fill="#fff"/><path d="M5.8 11.8 L2.8 10.6 L5.2 8.4 Z" fill="#fff"/></svg>
<svg class="rfa" style="left:1122.7px;top:621.2px" viewBox="0 0 14 14"><circle cx="7" cy="7" r="6.8" fill="#2f70b3"/><path d="M10.76 5.63 A4 4 0 0 1 5 10.46" fill="none" stroke="#fff" stroke-width="1.7"/><path d="M3.24 8.37 A4 4 0 0 1 9 3.54" fill="none" stroke="#fff" stroke-width="1.7"/><path d="M8.2 2.2 L11.2 3.4 L8.8 5.6 Z" fill="#fff"/><path d="M5.8 11.8 L2.8 10.6 L5.2 8.4 Z" fill="#fff"/></svg>
<svg class="rfa" style="left:1138.5px;top:695.0px" viewBox="0 0 14 14"><circle cx="7" cy="7" r="6.8" fill="#2f70b3"/><path d="M10.76 5.63 A4 4 0 0 1 5 10.46" fill="none" stroke="#fff" stroke-width="1.7"/><path d="M3.24 8.37 A4 4 0 0 1 9 3.54" fill="none" stroke="#fff" stroke-width="1.7"/><path d="M8.2 2.2 L11.2 3.4 L8.8 5.6 Z" fill="#fff"/><path d="M5.8 11.8 L2.8 10.6 L5.2 8.4 Z" fill="#fff"/></svg>
<svg class="rfa" style="left:1223.8px;top:769.0px" viewBox="0 0 14 14"><circle cx="7" cy="7" r="6.8" fill="#2f70b3"/><path d="M10.76 5.63 A4 4 0 0 1 5 10.46" fill="none" stroke="#fff" stroke-width="1.7"/><path d="M3.24 8.37 A4 4 0 0 1 9 3.54" fill="none" stroke="#fff" stroke-width="1.7"/><path d="M8.2 2.2 L11.2 3.4 L8.8 5.6 Z" fill="#fff"/><path d="M5.8 11.8 L2.8 10.6 L5.2 8.4 Z" fill="#fff"/></svg>
<svg class="rfa" style="left:1201.6px;top:841.5px" viewBox="0 0 14 14"><circle cx="7" cy="7" r="6.8" fill="#2f70b3"/><path d="M10.76 5.63 A4 4 0 0 1 5 10.46" fill="none" stroke="#fff" stroke-width="1.7"/><path d="M3.24 8.37 A4 4 0 0 1 9 3.54" fill="none" stroke="#fff" stroke-width="1.7"/><path d="M8.2 2.2 L11.2 3.4 L8.8 5.6 Z" fill="#fff"/><path d="M5.8 11.8 L2.8 10.6 L5.2 8.4 Z" fill="#fff"/></svg>
<svg class="rfa" style="left:571.0px;top:727.8px" viewBox="0 0 14 14"><circle cx="7" cy="7" r="6.8" fill="#2f70b3"/><path d="M10.76 5.63 A4 4 0 0 1 5 10.46" fill="none" stroke="#fff" stroke-width="1.7"/><path d="M3.24 8.37 A4 4 0 0 1 9 3.54" fill="none" stroke="#fff" stroke-width="1.7"/><path d="M8.2 2.2 L11.2 3.4 L8.8 5.6 Z" fill="#fff"/><path d="M5.8 11.8 L2.8 10.6 L5.2 8.4 Z" fill="#fff"/></svg>
<div class="lbl" style="left:309px;top:727px">Show exact location in Vrbo/HomeAway</div>
<div class="inp" style="left:309px;top:750px;width:755px;height:34px"><span class="v" style="left:15.7px;top:9px;color:#444">Yes</span><svg class="abs" style="left:740px;top:12px" width="11" height="8" viewBox="0 0 11 8"><path d="M1.3 1.6 L5.5 5.8 L9.7 1.6" fill="none" stroke="#555" stroke-width="2"/></svg></div>

<div class="lbl" style="left:1094px;top:329px">Address <span style="color:#e8501e;font-size:17px;line-height:0;position:relative;top:2px">*</span></div>
<div class="inp" style="left:1094px;top:351px;width:755px"><span class="v">7600 International Drive A, Orlando, FL 32819, EUA</span></div>
<div class="lbl" style="left:1094px;top:402px">Public address</div>
<div class="inp dis" style="left:1094px;top:425px;width:755px"><span class="v" style="font-size:14.62px">7600 International Drive, Orlando, Florida, Estados Unidos, 32819</span></div>
<div class="lbl" style="left:1094px;top:476px">Country</div>
<div class="inp" style="left:1094px;top:498px;width:755px;height:34px"><svg class="abs" style="left:11px;top:10px" width="15" height="11" viewBox="0 0 15 11"><rect width="15" height="11" fill="#fff"/><g fill="#c8312c"><rect y="0" width="15" height="1.2"/><rect y="2.4" width="15" height="1.2"/><rect y="4.8" width="15" height="1.2"/><rect y="7.2" width="15" height="1.2"/><rect y="9.6" width="15" height="1.4"/></g><rect width="7" height="6" fill="#3b3f7a"/></svg><span class="v" style="left:31px;top:8.5px;color:#333;font-size:13.6px">United States of America</span><svg class="abs" style="left:714px;top:9.5px" width="12" height="12" viewBox="0 0 12 12"><path d="M1.3 1.3 L10.7 10.7 M10.7 1.3 L1.3 10.7" stroke="#7d828b" stroke-width="1.9"/></svg><svg class="abs" style="left:733px;top:14px" width="10" height="6" viewBox="0 0 10 6"><path d="M0 0 H10 L5 5 Z" fill="#80858e"/></svg></div>
<div class="lbl" style="left:1094px;top:547px">State</div>
<div class="inp" style="left:1094px;top:570px;width:755px"><span class="v">FL</span></div>
<div class="lbl" style="left:1094px;top:621px">City</div>
<div class="inp" style="left:1094px;top:643px;width:755px"><span class="v" style="font-size:15px;top:7.5px">Orlando</span></div>
<div class="lbl" style="left:1094px;top:694px">Street</div>
<div class="inp" style="left:1094px;top:717px;width:755px;border-color:#2aa58a"><span class="v" style="font-size:14.8px;top:7.8px">7600 International Drive A</span></div>
<div class="lbl" style="left:1094px;top:767.8px">Zip code / Postcode</div>
<div class="inp" style="left:1094px;top:790px;width:755px"><span class="v" style="font-size:14.75px;top:8.6px">32819</span></div>
<div class="lbl" style="left:1094px;top:841px">Timezone name</div>
<div class="inp dis" style="left:1094px;top:864px;width:755px"><span class="v" style="font-size:14.62px">America/New_York</span></div>


<div class="red" style="left:597px;top:70px;width:317px;height:48px"></div>
<div class="red" style="left:1087px;top:320px;width:369px;height:80px"></div>
<div class="red" style="left:1089px;top:685px;width:254px;height:80px"></div>
</body></html>
